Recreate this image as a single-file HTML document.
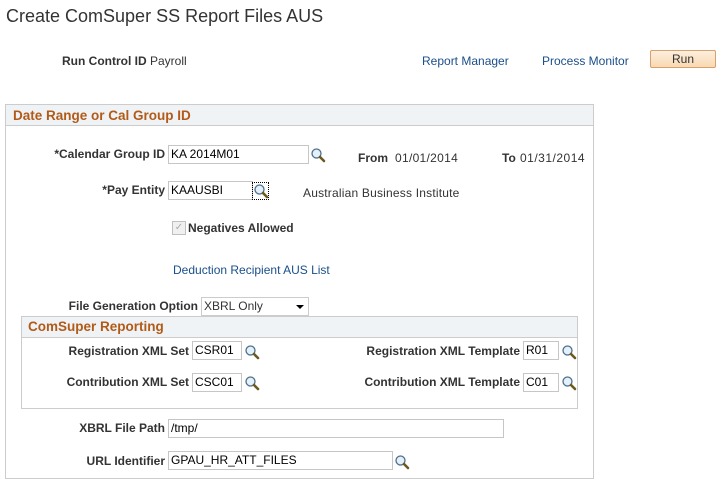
<!DOCTYPE html>
<html><head><style>
body{margin:0;width:719px;height:489px;background:#fff;font-family:"Liberation Sans",Arial,sans-serif;font-size:12px;color:#333;position:relative;overflow:hidden}
.a{position:absolute;white-space:nowrap}
.l{position:absolute;font-weight:bold;text-align:right;white-space:nowrap;line-height:18px}
.t{position:absolute;white-space:nowrap;line-height:18px}
.i{position:absolute;border:1px solid #c6c6c6;line-height:17px;padding-left:2px;box-sizing:border-box;height:19px;color:#000;white-space:nowrap}
.lk{color:#1a4f8b;position:absolute;line-height:18px;white-space:nowrap}
.s{position:absolute;width:16px;height:16px}
.hd{position:absolute;background:#f0f3f5;color:#b25a17;font-weight:bold;font-size:13.5px;line-height:22px;padding-left:7px;box-sizing:border-box}
</style></head><body>
<svg width="0" height="0" style="position:absolute"><defs><g id="mg"><circle cx="6.5" cy="6.5" r="4.5" fill="#e4f0fa" stroke="#4d6e8a" stroke-width="1.3"/><path d="M10 10 L14 14" stroke="#6b5a1f" stroke-width="2.6" stroke-linecap="round"/></g></defs></svg>
<div class="a" style="left:6px;top:6px;font-size:18px;color:#333">Create ComSuper SS Report Files AUS</div>
<div class="l" style="left:62px;top:52px">Run Control ID</div>
<div class="t" style="left:150px;top:52px">Payroll</div>
<div class="lk" style="left:422px;top:52px">Report Manager</div>
<div class="lk" style="left:542px;top:52px">Process Monitor</div>
<div class="a" style="left:650px;top:50px;width:66px;height:18px;box-sizing:border-box;border:1px solid #d8a06a;border-radius:2px;background:linear-gradient(#fdeedd,#f8d9b2);text-align:center;line-height:16px;color:#333">Run</div>

<div class="a" style="left:5px;top:104px;width:589px;height:375px;border:1px solid #ccc;box-sizing:border-box"></div>
<div class="hd" style="left:6px;top:105px;width:587px;height:21px;border-bottom:1px solid #ccc">Date Range or Cal Group ID</div>

<div class="l" style="left:0;width:165px;top:145px">*Calendar Group ID</div>
<div class="i" style="left:168px;top:145px;width:141px">KA 2014M01</div>
<svg class="s" style="left:310px;top:147px"><use href="#mg"/></svg>
<div class="l" style="left:358px;top:149px">From</div>
<div class="t" style="left:395px;top:149px;letter-spacing:0.3px">01/01/2014</div>
<div class="l" style="left:502px;top:149px">To</div>
<div class="t" style="left:520px;top:149px;letter-spacing:0.5px">01/31/2014</div>

<div class="l" style="left:0;width:165px;top:181px">*Pay Entity</div>
<div class="i" style="left:168px;top:181px;width:85px">KAAUSBI</div>
<div class="a" style="left:252px;top:182px;width:17px;height:18px;border:1px dotted #000;box-sizing:border-box"></div>
<svg class="s" style="left:253px;top:183px"><use href="#mg"/></svg>
<div class="t" style="left:303px;top:184px;letter-spacing:0.2px">Australian Business Institute</div>

<div class="a" style="left:172px;top:221px;width:12px;height:12px;border:1px solid #c0c0c0;background:#f0f0f0;color:#aaa;font-size:10px;line-height:12px;text-align:center">✓</div>
<div class="l" style="left:188px;top:219px">Negatives Allowed</div>

<div class="lk" style="left:173px;top:261px">Deduction Recipient AUS List</div>

<div class="l" style="left:0;width:198px;top:297px">File Generation Option</div>
<div class="i" style="left:201px;top:297px;width:108px;border-color:#ccc;color:#333">XBRL Only</div>
<div class="a" style="left:296px;top:305px;width:0;height:0;border-left:4px solid transparent;border-right:4px solid transparent;border-top:4px solid #000"></div>

<div class="a" style="left:21px;top:316px;width:557px;height:93px;border:1px solid #ccc;box-sizing:border-box"></div>
<div class="hd" style="left:22px;top:317px;width:555px;height:21px;border-bottom:1px solid #ccc;padding-left:6px;line-height:20px">ComSuper Reporting</div>

<div class="l" style="left:0;width:189px;top:342px">Registration XML Set</div>
<div class="i" style="left:192px;top:341px;width:50px">CSR01</div>
<svg class="s" style="left:244px;top:344px"><use href="#mg"/></svg>
<div class="l" style="left:0;width:520px;top:342px">Registration XML Template</div>
<div class="i" style="left:523px;top:341px;width:36px">R01</div>
<svg class="s" style="left:561px;top:344px"><use href="#mg"/></svg>

<div class="l" style="left:0;width:189px;top:373px">Contribution XML Set</div>
<div class="i" style="left:192px;top:373px;width:50px">CSC01</div>
<svg class="s" style="left:244px;top:375px"><use href="#mg"/></svg>
<div class="l" style="left:0;width:520px;top:373px">Contribution XML Template</div>
<div class="i" style="left:523px;top:373px;width:36px">C01</div>
<svg class="s" style="left:561px;top:375px"><use href="#mg"/></svg>

<div class="l" style="left:0;width:165px;top:419px">XBRL File Path</div>
<div class="i" style="left:168px;top:419px;width:336px">/tmp/</div>
<div class="l" style="left:0;width:165px;top:452px">URL Identifier</div>
<div class="i" style="left:168px;top:451px;width:225px">GPAU_HR_ATT_FILES</div>
<svg class="s" style="left:394px;top:454px"><use href="#mg"/></svg>
</body></html>
